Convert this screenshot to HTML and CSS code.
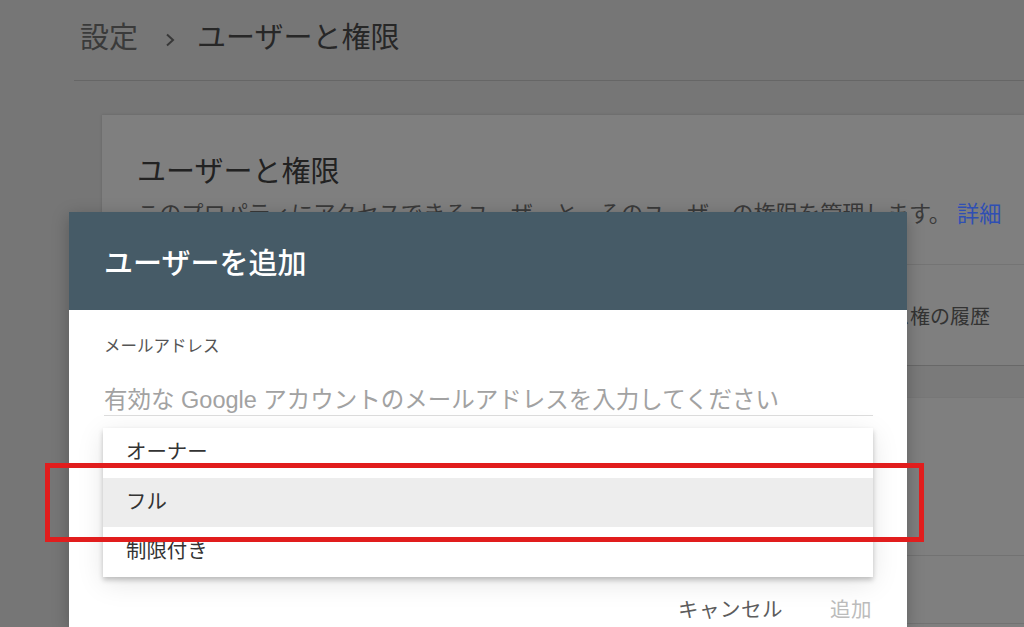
FILE: index.html
```html
<!DOCTYPE html>
<html lang="ja">
<head>
    <meta charset="UTF-8">
    <meta name="viewport" content="width=device-width, initial-scale=1.0">
    <title>ユーザーと権限</title>
    <link rel="stylesheet" href="styles.css">
</head>
<body>
    <div class="page">
        <div class="crumbs">
            <span class="crumb-root">設定</span>
            <svg class="chevron" width="12" height="14" viewBox="0 0 12 14"><path d="M3 1.5 L9 7 L3 12.5" fill="none" stroke="#383838" stroke-width="2"/></svg>
            <span class="crumb-current">ユーザーと権限</span>
        </div>

        <div class="card">
            <div class="card-head">
                <h2 class="card-title">ユーザーと権限</h2>
                <p class="card-desc">このプロパティにアクセスできるユーザーと、そのユーザーの権限を管理します。<a href="#" class="link">詳細</a></p>
            </div>
            <div class="tabs">
                <span class="tab">アクセス権の履歴</span>
            </div>
            <div class="table-head"></div>
            <div class="table-row"></div>
            <div class="table-row short"></div>
        </div>
    </div>

    <div class="dialog">
        <div class="dialog-head">ユーザーを追加</div>
        <div class="dialog-body">
            <label class="field-label" for="email">メールアドレス</label>
            <input type="text" id="email" class="field-input" placeholder="有効な Google アカウントのメールアドレスを入力してください">
        </div>
        <div class="dialog-foot">
            <button class="btn">キャンセル</button>
            <button class="btn disabled">追加</button>
        </div>

        <ul class="menu">
            <li>オーナー</li>
            <li class="active">フル</li>
            <li>制限付き</li>
        </ul>
    </div>

    <div class="highlight"></div>
</body>
</html>
```

FILE: styles.css
```css
body {
    margin: 0;
    height: 627px;
    overflow: hidden;
    background-color: #767676;
    font-family: "Liberation Sans", "Noto Sans CJK JP", sans-serif;
    color: #2c2c2c;
}

.page {
    padding-left: 74px;
}

.crumbs {
    display: flex;
    align-items: center;
    height: 80px;
    padding-left: 6px;
    border-bottom: 1px solid #666;
    font-size: 29px;
    line-height: 36px;
}

.crumbs span {
    position: relative;
    top: -2px;
}

.crumb-root {
    color: #3a3a3a;
}

.chevron {
    margin: 0 21px 0 26px;
}

.crumb-current {
    color: #272727;
}

.card {
    margin: 34px 0 0 28px;
    background-color: #7f7f7f;
    box-shadow: 0 0 3px rgba(0, 0, 0, 0.15);
    height: 512px;
    overflow: hidden;
}

.card-head {
    padding: 37px 0 34px 35px;
    border-bottom: 1px solid #747474;
}

.card-title {
    margin: 0;
    font-size: 29px;
    font-weight: normal;
    line-height: 40px;
    color: #222;
}

.card-desc {
    margin: 8px 0 0;
    font-size: 22.2px;
    line-height: 30px;
    color: #3a3a3a;
    white-space: nowrap;
}

.link {
    margin-left: 6px;
    color: #2f4fb3;
    text-decoration: none;
}

.tabs {
    display: flex;
    justify-content: flex-end;
    align-items: center;
    height: 100px;
    padding-right: 34px;
    border-bottom: 1px solid #686868;
    font-size: 20px;
    color: #333;
}

.table-head {
    height: 31px;
    background-color: #7a7a7a;
    border-bottom: 1px solid #777;
}

.table-row {
    height: 157px;
    border-bottom: 1px solid #727272;
}

.table-row.short {
    height: 67px;
}

.dialog {
    position: absolute;
    left: 69px;
    top: 212px;
    width: 838px;
    height: 415px;
    background-color: #fff;
    box-shadow: 0 4px 16px rgba(0, 0, 0, 0.25);
}

.dialog-head {
    display: flex;
    align-items: center;
    height: 98px;
    padding-left: 35px;
    background-color: #465b67;
    color: #fff;
    font-size: 29px;
    font-weight: 500;
}

.dialog-body {
    padding: 25px 34px 0 35px;
}

.field-label {
    display: block;
    font-size: 16.5px;
    line-height: 22px;
    color: #555;
}

.field-input {
    display: block;
    width: 100%;
    box-sizing: border-box;
    margin-top: 28px;
    padding: 0;
    height: 31px;
    border: none;
    border-bottom: 1px solid #ddd;
    font-family: "Liberation Sans", "Noto Sans CJK JP", sans-serif;
    font-size: 23.5px;
    line-height: 28px;
    outline: none;
}

.field-input::placeholder {
    color: #a2a2a2;
}

.dialog-foot {
    display: flex;
    justify-content: flex-end;
    gap: 47px;
    margin-top: 179px;
    padding-right: 35px;
}

.btn {
    padding: 0;
    border: none;
    background: none;
    font-family: "Liberation Sans", "Noto Sans CJK JP", sans-serif;
    font-size: 20.5px;
    line-height: 30px;
    color: #5c5c5c;
    letter-spacing: 0.5px;
}

.btn.disabled {
    color: #bcbcbc;
}

.menu {
    position: absolute;
    left: 34px;
    top: 216px;
    width: 770px;
    margin: 0;
    padding: 0;
    list-style: none;
    background-color: #fff;
    box-shadow: 0 3px 5px rgba(0, 0, 0, 0.22), 0 6px 26px rgba(0, 0, 0, 0.1);
}

.menu li {
    height: 50px;
    padding-left: 23px;
    font-size: 20.4px;
    line-height: 48px;
    color: #333;
}

.menu li.active {
    height: 49px;
    background-color: #ededed;
}

.highlight {
    position: absolute;
    left: 45px;
    top: 463px;
    width: 869px;
    height: 69px;
    border: 5px solid #e11d1d;
}
```
